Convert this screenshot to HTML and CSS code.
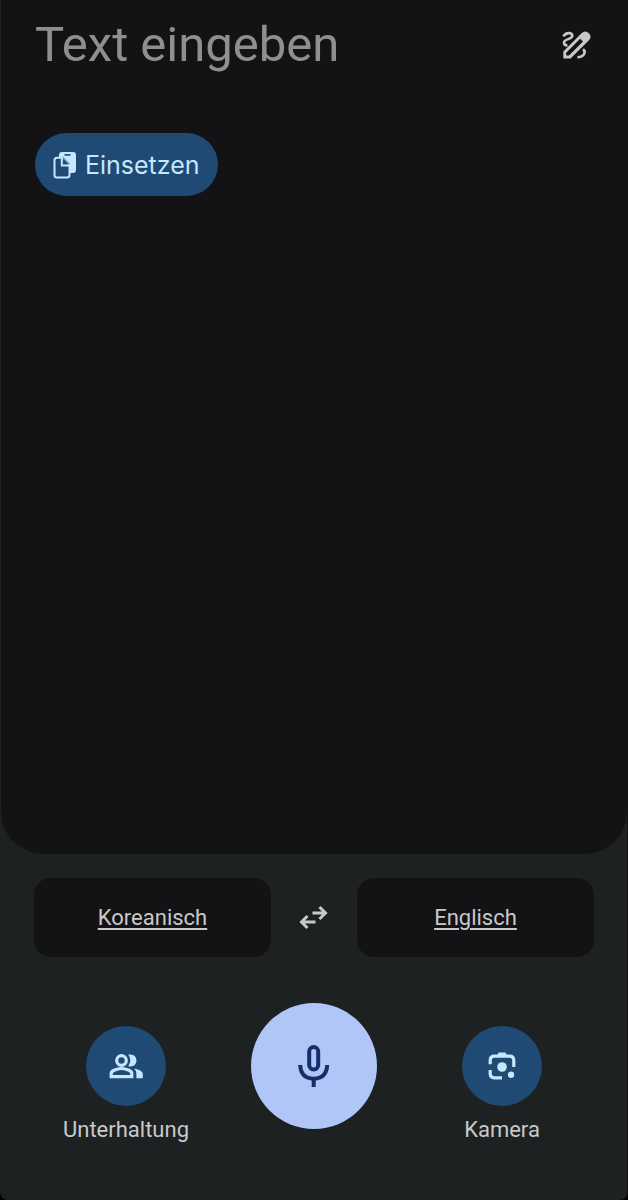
FILE: index.html
```html
<!DOCTYPE html>
<html lang="de">
<head>
  <meta charset="UTF-8">
  <meta name="viewport" content="width=device-width, initial-scale=1.0">
  <title>Übersetzer</title>
  <link rel="stylesheet" href="styles.css">
</head>
<body>
  <div class="app">
    <main class="panel">
      <div class="input-row">
        <textarea class="text-input" rows="1" placeholder="Text eingeben" aria-label="Text eingeben"></textarea>
        <button class="icon-button" aria-label="Handschrift">
          <svg width="32" height="32" viewBox="0 0 32 32">
            <path fill="currentColor" fill-rule="evenodd" d="M2.300 22.500 20.800 4Q24.400 1 27.600 4L28.200 4.600Q31 8 28 11.200L9.500 29.500H2.300ZM5.200 23.800V26.600H8L22 12.600 19.200 9.800Z"/>
            <path fill="none" stroke="currentColor" stroke-width="2.600" d="M2.400 7.400C5 3.400 10.800 3 11.300 6.600 11.500 10.600 3.200 9.600 3 13.400 3 15.400 4.400 16.400 6.400 16.600M22 20.400C25.400 22.600 23.400 28 16.400 28.200"/>
          </svg>
        </button>
      </div>
      <button class="paste">
        <svg width="24" height="28" viewBox="0 0 24 28">
          <path fill="currentColor" d="M6 7V4Q6 1 9 1H20Q23 1 23 4V19Q23 22 20 22H17V13L10 6Z"/>
          <path stroke="#1f4a73" stroke-width="1.600" d="M11.500 3.900H17.500"/>
          <path fill="#1f4a73" stroke="currentColor" stroke-width="2" stroke-linejoin="round" d="M4 6.800H8.500L16.500 14.800V24Q16.500 26.500 14 26.500H4Q1.500 26.500 1.500 24V9.300Q1.500 6.800 4 6.800Z"/>
          <path fill="#1f4a73" d="M9.800 7.200 16.200 13.600H9.800Z"/>
          <path fill="none" stroke="currentColor" stroke-width="2" d="M8.800 6.500V14.600H17"/>
        </svg>
        Einsetzen
      </button>
    </main>

    <div class="languages">
      <button class="language">Koreanisch</button>
      <button class="icon-button swap" aria-label="Sprachen tauschen">
        <svg width="32" height="32" viewBox="0 0 32 32">
          <path fill="none" stroke="currentColor" stroke-width="3" d="M14.500 11H28M21.500 5 27.500 11 21.500 17M17.500 20H3.500M9.500 14 3.500 20 9.500 26"/>
        </svg>
      </button>
      <button class="language">Englisch</button>
    </div>

    <nav class="actions">
      <button class="action">
        <span class="circle">
          <svg width="36" height="36" viewBox="0 0 36 36">
            <g fill="none" stroke="currentColor" stroke-width="3.200">
              <circle cx="13.500" cy="12.500" r="4.800"/>
              <path d="M3.200 28.600V25.500Q3.200 23.500 6 22.200 13.500 18.800 21 22.200 23.800 23.500 23.800 25.500V28.600Z"/>
            </g>
            <path fill="currentColor" d="M20.200 6.600Q28 5.400 28.500 12.500 28 19.400 20.200 18.300 24.600 12.500 20.200 6.600ZM26 20.600Q34.800 22.300 34.800 26V30.200H28.400V25.500Q28.400 22.800 26 20.600Z"/>
          </svg>
        </span>
        Unterhaltung
      </button>
      <button class="mic" aria-label="Spracheingabe">
        <svg width="44" height="44" viewBox="0 0 44 44">
          <g fill="none" stroke="currentColor" stroke-width="4">
            <rect x="17.200" y="3" width="9" height="22.500" rx="4.500"/>
            <path d="M8.200 21Q8.800 34.500 21.700 34.700 34.500 34.500 35.200 21M21.700 34V43"/>
          </g>
        </svg>
      </button>
      <button class="action">
        <span class="circle">
          <svg width="36" height="36" viewBox="0 0 36 36">
            <path fill="none" stroke="currentColor" stroke-width="3.200" d="M6.200 16.200V12.500Q6.200 8.200 10.500 8.200H25.500Q29.800 8.200 29.800 12.500V19M6.200 22V25.500Q6.200 29.800 10.500 29.800H18"/>
            <path fill="currentColor" d="M13 8 14.500 4.500H21.500L23 8Z"/>
            <circle cx="18" cy="19" r="4.800" fill="currentColor"/>
            <circle cx="27" cy="26.800" r="3.200" fill="currentColor"/>
          </svg>
        </span>
        Kamera
      </button>
    </nav>
  </div>
</body>
</html>
```

FILE: styles.css
```css
* {
  box-sizing: border-box;
}

body {
  margin: 0;
  background: #000;
  color: #c7c9ca;
  font-family: 'Roboto', 'Inter', sans-serif;
}

button {
  padding: 0;
  border: none;
  background: none;
  color: inherit;
  font: inherit;
  cursor: pointer;
}

svg {
  display: block;
  flex: none;
}

.app {
  display: flex;
  flex-direction: column;
  min-height: 100vh;
  padding-left: 1px;
  border-right: 1px solid #131315;
  background: #1e2122;
  border-radius: 0 0 8px 8px;
}

.panel {
  flex: 1;
  padding: 14px 34px;
  background: #131315;
  border-radius: 0 0 42px 42px;
}

.input-row {
  display: flex;
  align-items: center;
  justify-content: space-between;
  margin-bottom: 57px;
}

.text-input {
  flex: 1;
  min-width: 0;
  height: 62px;
  padding: 0;
  border: none;
  outline: none;
  resize: none;
  overflow: hidden;
  background: none;
  color: #e3e3e3;
  font-family: inherit;
  font-size: 49px;
  line-height: 62px;
}

.text-input::placeholder {
  color: #8f8f91;
  opacity: 1;
}

.paste {
  display: flex;
  align-items: center;
  gap: 8px;
  height: 63px;
  padding: 0 18px;
  border-radius: 32px;
  background: #1f4a73;
  color: #c5e7ff;
  font-family: 'Inter', sans-serif;
  font-size: 25px;
}

.languages {
  display: flex;
  align-items: center;
  padding: 24px 33px 0;
}

.language {
  flex: 1;
  height: 79px;
  border-radius: 17px;
  background: #131315;
  font-size: 22px;
  text-decoration: underline;
  text-decoration-thickness: 2px;
  text-underline-offset: 3px;
}

.swap {
  display: flex;
  justify-content: center;
  width: 86px;
}

.actions {
  display: grid;
  grid-template-columns: repeat(3, 1fr);
  justify-items: center;
  align-items: start;
  padding: 46px 31px 56px;
}

.action {
  display: flex;
  flex-direction: column;
  align-items: center;
  gap: 10px;
  margin-top: 23px;
  font-size: 22px;
  line-height: 28px;
}

.circle,
.mic {
  display: flex;
  align-items: center;
  justify-content: center;
  border-radius: 50%;
}

.circle {
  width: 80px;
  height: 80px;
  background: #1f4a73;
  color: #c5e7ff;
}

.mic {
  width: 126px;
  height: 126px;
  background: #afc6f6;
  color: #162e69;
}
```
